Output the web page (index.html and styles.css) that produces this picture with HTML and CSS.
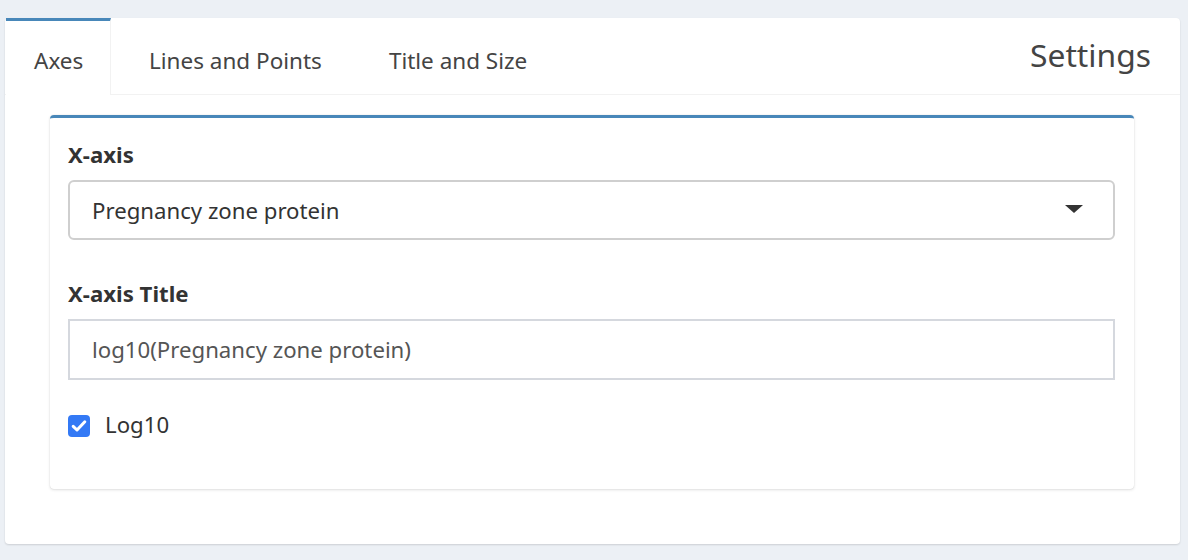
FILE: index.html
```html
<!DOCTYPE html>
<html lang="en">
<head>
<meta charset="utf-8">
<title>Settings</title>
<link rel="stylesheet" href="styles.css">
</head>
<body>
  <div class="tabcard">
    <div class="tabcard-header">
      <ul class="tabs">
        <li class="tab active">Axes</li>
        <li class="tab">Lines and Points</li>
        <li class="tab">Title and Size</li>
      </ul>
      <div class="tabcard-title">Settings</div>
    </div>
    <div class="tab-pane">
      <div class="box">
        <div class="form-group">
          <label class="field-label">X-axis</label>
          <div class="select">
            <span class="select-value">Pregnancy zone protein</span>
            <svg class="caret" width="18" height="8" viewBox="0 0 18 8"><path d="M0 0H18L9 8Z" fill="#333"/></svg>
          </div>
        </div>
        <div class="form-group second">
          <label class="field-label">X-axis Title</label>
          <div class="text-input">log10(Pregnancy zone protein)</div>
        </div>
        <label class="check-row">
          <span class="checkbox">
            <svg width="16" height="14" viewBox="0 0 16 14"><path d="M2.2 7.4L6 11L13.8 2.8" fill="none" stroke="#fff" stroke-width="3" stroke-linecap="round" stroke-linejoin="round"/></svg>
          </span>
          <span class="check-text">Log10</span>
        </label>
      </div>
    </div>
  </div>
</body>
</html>
```
FILE: styles.css
```css
* { box-sizing: border-box; }

html, body {
  margin: 0;
  background: #ecf0f5;
}

body {
  padding: 18px 8px 16px 5px;
  font-family: "Noto Sans", "Open Sans", sans-serif;
  color: #333;
}

.tabcard {
  background: #fff;
  border-radius: 4px;
  box-shadow: 0 1px 2px rgba(0, 0, 0, 0.14);
}

.tabcard-header {
  display: flex;
  border-bottom: 1px solid #f2f2f2;
}

.tabs {
  display: flex;
  list-style: none;
  margin: 0 0 -1px 1px;
  padding: 0;
}

.tab {
  height: 77px;
  padding: 25px 29px 0 29px;
  border-top: 3px solid transparent;
  font-size: 22.5px;
  line-height: 30px;
  color: #444;
  margin-left: 9px;
}

.tab.active {
  margin-left: 0;
  width: 105px;
  padding-left: 28px;
  border-top-color: #4887b9;
  border-right: 1px solid #f2f2f2;
  background: #fff;
}

.tabcard-title {
  margin-left: auto;
  padding: 17px 29px 0 0;
  font-size: 31.8px;
  line-height: 40px;
  color: #444;
}

.tab-pane {
  padding: 20px 46px 55px 45px;
}

.box {
  border-top: 3px solid #4887b9;
  border-radius: 4px;
  box-shadow: 0 0 1px rgba(0, 0, 0, 0.16), 0 1px 3px rgba(0, 0, 0, 0.12);
  padding: 22px 19px 51px 18px;
}

.field-label {
  display: block;
  font-weight: 700;
  font-size: 22.2px;
  line-height: 30px;
  color: #333;
  margin-bottom: 10px;
}

.form-group.second {
  margin-top: 39px;
}

.select {
  display: flex;
  align-items: center;
  height: 60px;
  border: 2px solid #cfcfcf;
  border-radius: 6px;
  padding: 0 30px 0 22px;
  font-size: 22.2px;
  color: #333;
}

.select-value {
  flex: 1;
  padding-top: 1px;
}

.caret {
  display: block;
  margin-top: -2px;
}

.text-input {
  display: flex;
  align-items: center;
  height: 61px;
  border: 2px solid #d5d8de;
  padding: 0 22px;
  font-size: 22.2px;
  color: #555;
}

.check-row {
  display: flex;
  align-items: flex-start;
  margin-top: 31px;
}

.checkbox {
  display: flex;
  align-items: center;
  justify-content: center;
  width: 22px;
  height: 22px;
  margin-top: 4px;
  border-radius: 4px;
  background: #3379f5;
}

.check-text {
  margin-left: 15px;
  padding-top: 1px;
  font-size: 22.2px;
  line-height: 26px;
  color: #333;
}
```
